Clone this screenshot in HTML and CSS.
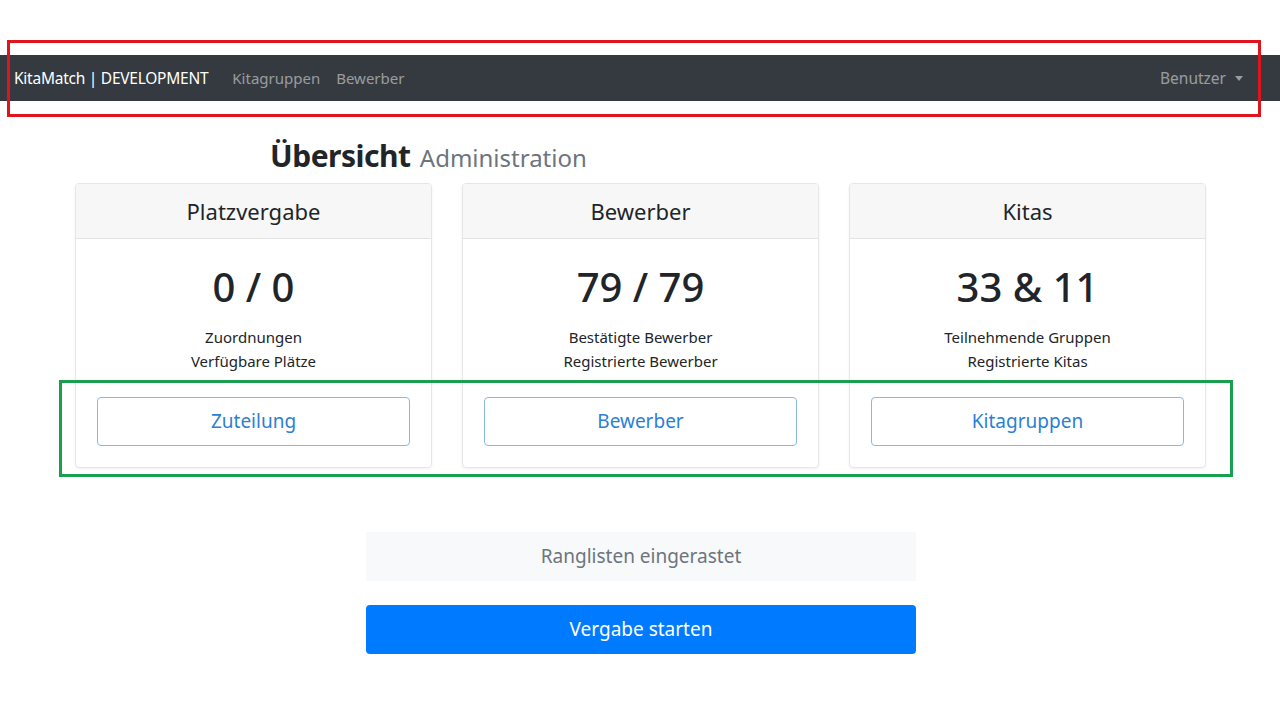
FILE: index.html
```html
<!DOCTYPE html>
<html lang="de">
<head>
<meta charset="utf-8">
<title>KitaMatch</title>
<link rel="stylesheet" href="styles.css">
</head>
<body>
<div class="page">
  <nav class="navbar">
    <div class="nav-left">
      <span class="brand">KitaMatch | DEVELOPMENT</span>
      <a class="nav-link">Kitagruppen</a>
      <a class="nav-link">Bewerber</a>
    </div>
    <div class="nav-right">
      <a class="nav-link">Benutzer</a><span class="caret"></span>
    </div>
  </nav>
  <main class="main">
    <h1 class="title">Übersicht <small>Administration</small></h1>
    <div class="cards">
      <div class="card">
        <div class="card-header">Platzvergabe</div>
        <div class="card-body">
          <div class="stat">0 / 0</div>
          <p class="desc">Zuordnungen<br>Verfügbare Plätze</p>
          <a class="btn-outline">Zuteilung</a>
        </div>
      </div>
      <div class="card">
        <div class="card-header">Bewerber</div>
        <div class="card-body">
          <div class="stat">79 / 79</div>
          <p class="desc">Bestätigte Bewerber<br>Registrierte Bewerber</p>
          <a class="btn-outline">Bewerber</a>
        </div>
      </div>
      <div class="card">
        <div class="card-header">Kitas</div>
        <div class="card-body">
          <div class="stat">33 &amp; 11</div>
          <p class="desc">Teilnehmende Gruppen<br>Registrierte Kitas</p>
          <a class="btn-outline">Kitagruppen</a>
        </div>
      </div>
    </div>
    <div class="actions">
      <div class="locked">Ranglisten eingerastet</div>
      <a class="btn-primary">Vergabe starten</a>
    </div>
  </main>
  <div class="mark mark-red"></div>
  <div class="mark mark-green"></div>
</div>
</body>
</html>
```
FILE: styles.css
```css
* { box-sizing: border-box; }
html, body { margin: 0; background: #fff; }
body {
  font-family: "Noto Sans", "Open Sans", sans-serif;
  color: #212529;
  width: 1280px;
  height: 720px;
  overflow: hidden;
}
.page { position: relative; padding-top: 55px; }
.navbar {
  height: 46px;
  background: #343a40;
  display: flex;
  align-items: center;
  justify-content: space-between;
  padding: 0 37px 0 14px;
}
.nav-left, .nav-right { display: flex; align-items: center; }
.brand { color: #fff; font-size: 15.5px; margin-right: 24px; letter-spacing: -0.25px; }
.nav-link { color: rgba(255,255,255,0.5); font-size: 15px; margin-right: 16px; }
.nav-right .nav-link { margin-right: 9px; font-size: 15.5px; }
.caret {
  width: 0; height: 0;
  border-left: 4.5px solid transparent;
  border-right: 4.5px solid transparent;
  border-top: 5px solid rgba(255,255,255,0.5);
}
.main { padding-top: 36px; }
.title {
  margin: 0 0 6px 270px;
  font-size: 30px;
  font-weight: 700;
  line-height: 38px;
  letter-spacing: -0.5px;
}
.title small { font-size: 24px; font-weight: 400; color: #6c757d; letter-spacing: 0; margin-left: 2px; }
.cards {
  display: flex;
  gap: 30px;
  padding-left: 75px;
}
.card {
  width: 357px;
  height: 285px;
  border: 1px solid #e6e6e6;
  border-radius: 4px;
  box-shadow: 0 1px 3px rgba(0,0,0,0.06);
  overflow: hidden;
}
.card-header {
  height: 55px;
  background: #f7f7f7;
  border-bottom: 1px solid #e3e3e3;
  text-align: center;
  font-size: 22px;
  line-height: 55px;
}
.card-body { padding: 20px 21px 20px; text-align: center; }
.stat { font-size: 40px; line-height: 56px; font-weight: 500; }
.desc { font-size: 15px; line-height: 24px; margin: 10px 0 24px; }
.btn-outline {
  display: block;
  height: 49px;
  border: 1px solid #8ab8e6;
  border-radius: 4px;
  color: #2b7fd4;
  font-size: 19px;
  line-height: 47px;
}
.actions {
  width: 550px;
  margin: 64px 0 0 366px;
  display: flex;
  flex-direction: column;
  gap: 24px;
}
.locked {
  height: 49px;
  background: #f8f9fa;
  color: #6c757d;
  font-size: 19px;
  line-height: 49px;
  text-align: center;
}
.btn-primary {
  height: 49px;
  background: #007bff;
  color: #fff;
  border-radius: 4px;
  font-size: 19px;
  line-height: 49px;
  text-align: center;
}
.mark { position: absolute; border-style: solid; border-width: 3px; }
.mark-red { left: 7px; top: 40px; width: 1254px; height: 77px; border-color: #e0141c; }
.mark-green { left: 59px; top: 380px; width: 1174px; height: 97px; border-color: #1a9e50; }
```
